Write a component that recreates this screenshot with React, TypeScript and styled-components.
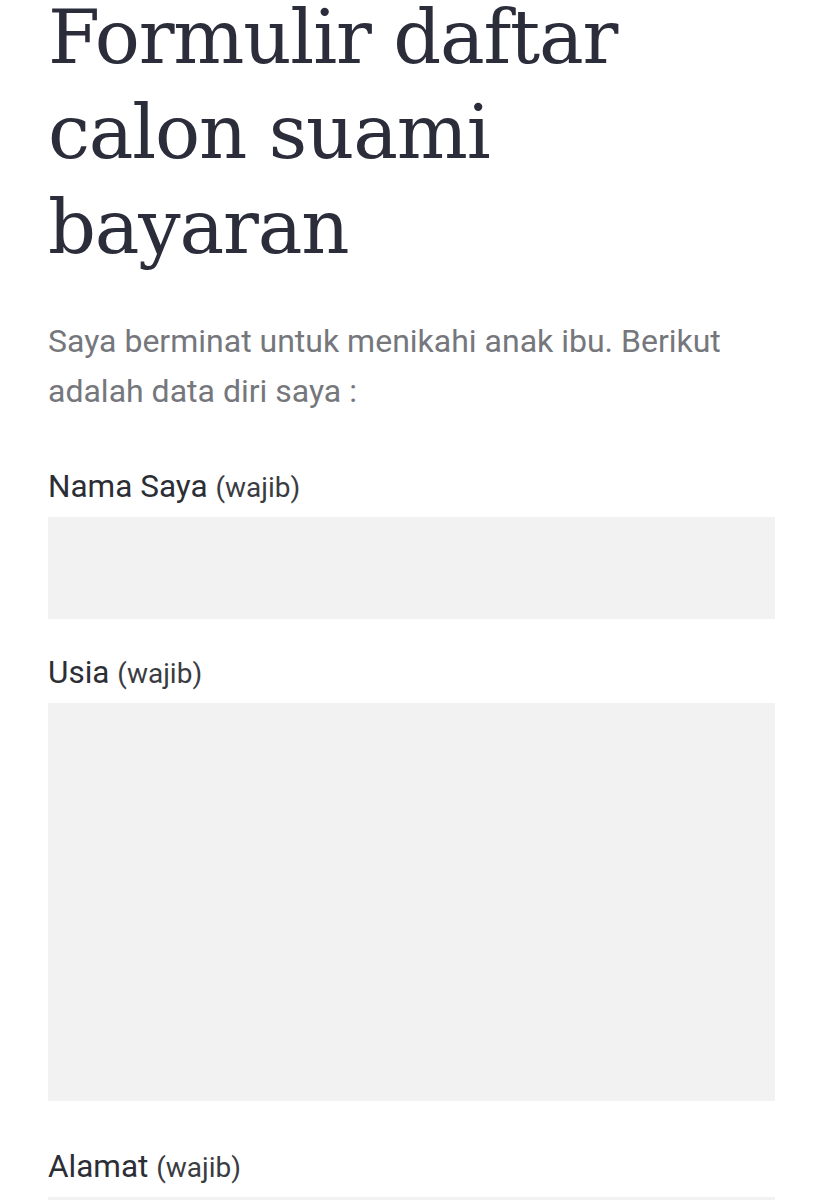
import React from "react";
import styled, { createGlobalStyle } from "styled-components";

const GlobalStyle = createGlobalStyle`
  html, body {
    margin: 0;
    padding: 0;
    background: #ffffff;
  }
  body {
    font-family: Roboto, "Noto Sans", "Liberation Sans", sans-serif;
    -webkit-font-smoothing: antialiased;
    overflow: hidden;
  }
`;

const Page = styled.main`
  display: flex;
  flex-direction: column;
  padding: 0 48px;
`;

const Title = styled.h1`
  margin: -10px 0 0;
  font-family: "DejaVu Serif", "Liberation Serif", serif;
  font-weight: 400;
  font-size: 75px;
  line-height: 95px;
  letter-spacing: -1.2px;
  color: #2b2e3a;
  max-width: 620px;
`;

const Intro = styled.p`
  margin: 41px 0 0;
  font-size: 32px;
  line-height: 50px;
  color: #75777c;
  max-width: 700px;
`;

const Form = styled.form`
  display: flex;
  flex-direction: column;
  margin-top: 51px;
`;

const Field = styled.div<{ $after: number }>`
  display: flex;
  flex-direction: column;
  gap: 10px;
  margin-bottom: ${(p) => p.$after}px;
`;

const Label = styled.label`
  font-size: 31.5px;
  line-height: 40px;
  color: #2c2e35;
`;

const Hint = styled.span`
  font-size: 28px;
  line-height: 1;
  color: #3a3c42;
`;

const TextInput = styled.input`
  display: block;
  box-sizing: border-box;
  width: 100%;
  height: 102px;
  border: none;
  margin: 0;
  padding: 0 16px;
  background: #f2f2f2;
  font: inherit;
  font-size: 28px;
  outline: none;
`;

const TextArea = styled.textarea`
  display: block;
  box-sizing: border-box;
  width: 100%;
  height: 398px;
  border: none;
  margin: 0;
  padding: 16px;
  background: #f2f2f2;
  font: inherit;
  font-size: 28px;
  resize: none;
  outline: none;
`;

export default function App() {
  return (
    <>
      <GlobalStyle />
      <Page>
        <Title>Formulir daftar calon suami bayaran</Title>
        <Intro>Saya berminat untuk menikahi anak ibu. Berikut adalah data diri saya :</Intro>
        <Form onSubmit={(e) => e.preventDefault()}>
          <Field $after={34}>
            <Label htmlFor="nama">
              Nama Saya <Hint>(wajib)</Hint>
            </Label>
            <TextInput id="nama" type="text" />
          </Field>
          <Field $after={46}>
            <Label htmlFor="usia">
              Usia <Hint>(wajib)</Hint>
            </Label>
            <TextArea id="usia" />
          </Field>
          <Field $after={0}>
            <Label htmlFor="alamat">
              Alamat <Hint>(wajib)</Hint>
            </Label>
            <TextInput id="alamat" type="text" />
          </Field>
        </Form>
      </Page>
    </>
  );
}
